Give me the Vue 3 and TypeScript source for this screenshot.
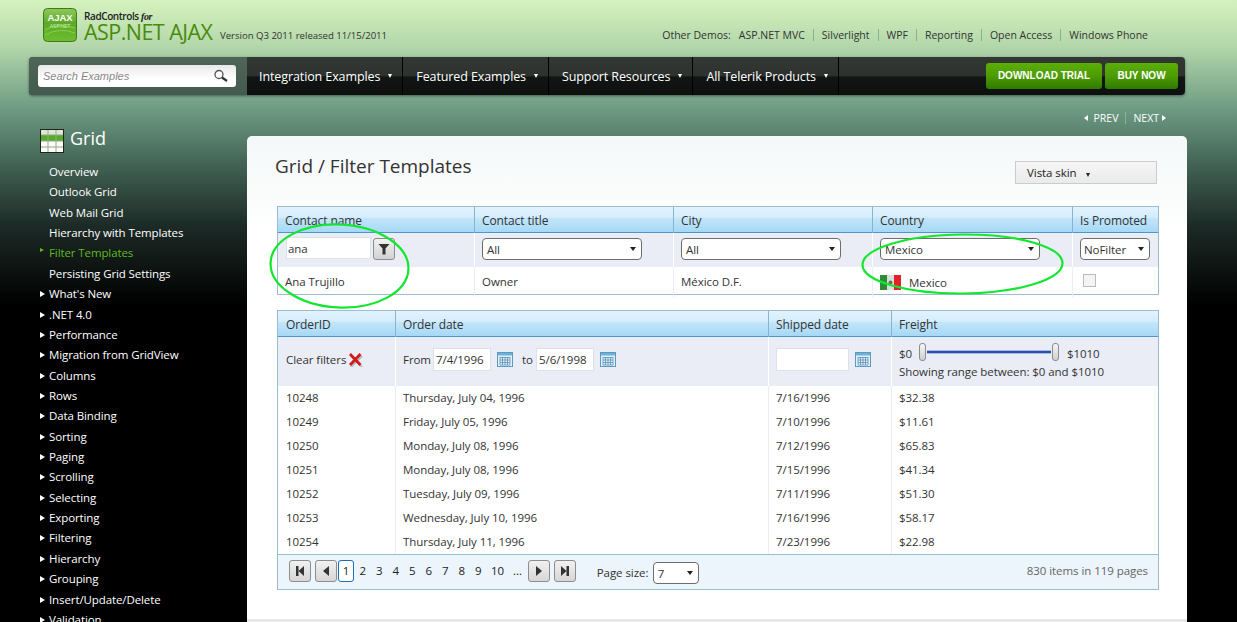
<script setup lang="ts">
const demos = ['ASP.NET MVC', 'Silverlight', 'WPF', 'Reporting', 'Open Access', 'Windows Phone']
const navs = ['Integration Examples', 'Featured Examples', 'Support Resources', 'All Telerik Products']
const plain = ['Overview', 'Outlook Grid', 'Web Mail Grid', 'Hierarchy with Templates']
const arrowed = ["What's New", '.NET 4.0', 'Performance', 'Migration from GridView', 'Columns', 'Rows', 'Data Binding', 'Sorting', 'Paging', 'Scrolling', 'Selecting', 'Exporting', 'Filtering', 'Hierarchy', 'Grouping', 'Insert/Update/Delete', 'Validation']
const orders = [
  ['10248', 'Thursday, July 04, 1996', '7/16/1996', '$32.38'],
  ['10249', 'Friday, July 05, 1996', '7/10/1996', '$11.61'],
  ['10250', 'Monday, July 08, 1996', '7/12/1996', '$65.83'],
  ['10251', 'Monday, July 08, 1996', '7/15/1996', '$41.34'],
  ['10252', 'Tuesday, July 09, 1996', '7/11/1996', '$51.30'],
  ['10253', 'Wednesday, July 10, 1996', '7/16/1996', '$58.17'],
  ['10254', 'Thursday, July 11, 1996', '7/23/1996', '$22.98']
]
const pages = ['2', '3', '4', '5', '6', '7', '8', '9', '10', '...']
</script>

<template>
  <div class="page">
    <header class="top">
      <div class="brand">
        <svg class="logo" width="35" height="35" viewBox="0 0 35 35">
          <defs>
            <linearGradient id="lg" x1="0" y1="0" x2="0" y2="1">
              <stop offset="0" stop-color="#8fc95a" />
              <stop offset="0.45" stop-color="#5da92a" />
              <stop offset="1" stop-color="#6ebd2e" />
            </linearGradient>
          </defs>
          <rect x="0.5" y="0.5" width="33" height="33" rx="4" fill="url(#lg)" stroke="#3f7a1c" />
          <path d="M2 22 Q14 14 32 20 M2 27 Q16 19 32 25" stroke="#86cf4c" fill="none" />
          <text x="17" y="13" text-anchor="middle" class="logo-a">AJAX</text>
          <text x="17" y="20" text-anchor="middle" class="logo-b">ASP.NET</text>
        </svg>
        <div class="brand-text">
          <div class="rad">RadControls <i>for</i></div>
          <div class="asp">ASP.NET AJAX</div>
        </div>
        <div class="version">Version Q3 2011 released 11/15/2011</div>
      </div>
      <div class="demos">
        <span class="demos-label">Other Demos:</span>
        <span v-for="d in demos" :key="d" class="demo">{{ d }}</span>
      </div>
    </header>

    <nav class="bar">
      <div class="search-wrap">
        <div class="search">
          <span>Search Examples</span>
          <svg width="16" height="14" viewBox="0 0 16 14">
            <circle cx="6" cy="5.5" r="4" fill="#fff" stroke="#555" stroke-width="1.3" />
            <path d="M9 8.5 L14 12" stroke="#333" stroke-width="2.2" />
          </svg>
        </div>
      </div>
      <div class="menu">
        <div v-for="n in navs" :key="n" class="menu-item">{{ n }}<i class="down white"></i></div>
      </div>
      <div class="cta">
        <span class="btn trial">DOWNLOAD TRIAL</span>
        <span class="btn buy">BUY NOW</span>
      </div>
    </nav>

    <div class="prevnext">
      <i class="tri-l"></i><span class="pn">PREV</span><span class="pn-sep"></span><span class="pn">NEXT</span><i class="tri-r"></i>
    </div>

    <div class="columns">
      <aside class="side">
        <div class="side-head">
          <svg width="24" height="24" viewBox="0 0 24 24">
            <rect x="0.5" y="0.5" width="23" height="23" fill="#fafcf5" stroke="#222" />
            <rect x="1" y="1" width="22" height="5" fill="#dfe8d2" />
            <rect x="1" y="6" width="22" height="6" fill="#4fae24" />
            <path d="M8 1V23M16 1V23M1 6H23M1 12H23M1 18H23" stroke="#97a690" stroke-width="1" fill="none" />
          </svg>
          <span>Grid</span>
        </div>
        <ul class="side-list">
          <li v-for="p in plain" :key="p">{{ p }}</li>
          <li class="active"><i class="tri-s green"></i>Filter Templates</li>
          <li>Persisting Grid Settings</li>
          <li v-for="a in arrowed" :key="a"><i class="tri-s"></i>{{ a }}</li>
        </ul>
      </aside>

      <main class="panel">
        <div class="panel-head">
          <h1>Grid / Filter Templates</h1>
          <div class="skin">Vista skin<i class="down dark"></i></div>
        </div>

        <section class="grid g1">
          <div class="row head">
            <div>Contact name</div><div>Contact title</div><div>City</div><div>Country</div><div>Is Promoted</div>
          </div>
          <div class="row filter f1">
            <div class="fc">
              <span class="txt w86">ana</span>
              <span class="fbtn">
                <svg width="12" height="12" viewBox="0 0 12 12"><path d="M0.5 1H11.5L7.5 5.5V11.5H4.5V5.5Z" fill="#333" /></svg>
              </span>
            </div>
            <div class="fc"><span class="sel">All<i class="down dark big"></i></span></div>
            <div class="fc"><span class="sel">All<i class="down dark big"></i></span></div>
            <div class="fc"><span class="sel">Mexico<i class="down dark big"></i></span></div>
            <div class="fc"><span class="sel small">NoFilter<i class="down dark big"></i></span></div>
          </div>
          <div class="row data tall">
            <div>Ana Trujillo</div><div>Owner</div><div>México D.F.</div>
            <div class="country">
              <svg width="21" height="15" viewBox="0 0 21 15">
                <rect width="7" height="15" fill="#2e8b3a" /><rect x="7" width="7" height="15" fill="#dcdcdc" /><rect x="14" width="7" height="15" fill="#e0222a" />
                <circle cx="10.5" cy="7.5" r="2" fill="#6b6b5a" />
              </svg>
              <span>Mexico</span>
            </div>
            <div><span class="check"></span></div>
          </div>
        </section>

        <section class="grid g2">
          <div class="row head">
            <div>OrderID</div><div>Order date</div><div>Shipped date</div><div>Freight</div>
          </div>
          <div class="row filter f2">
            <div class="clear">Clear filters
              <svg width="15" height="15" viewBox="0 0 15 15"><path d="M3 4L14 15M14 4L3 15" stroke="#999" stroke-width="2" opacity="0.6" /><path d="M2 2L12.5 13M12.5 2L2 13" stroke="#d11a1a" stroke-width="2.8" /></svg>
            </div>
            <div class="dates">
              <span class="from">From</span><span class="txt dt">7/4/1996</span>
              <svg class="cal" width="16" height="15" viewBox="0 0 16 15"><use href="#cal-icon" /></svg>
              <span class="to">to</span><span class="txt dt">5/6/1998</span>
              <svg class="cal" width="16" height="15" viewBox="0 0 16 15"><use href="#cal-icon" /></svg>
            </div>
            <div class="dates">
              <span class="txt ship"></span>
              <svg class="cal" width="16" height="15" viewBox="0 0 16 15">
                <defs>
                  <g id="cal-icon">
                    <rect x="0.5" y="0.5" width="15" height="14" fill="#e4f0f8" stroke="#5b9ac0" />
                    <rect x="1" y="1" width="14" height="2.5" fill="#6fb0d6" />
                    <path d="M3 5.5H13M3 8H13M3 10.5H13M3 13H13M3 5V13M5.5 5V13M8 5V13M10.5 5V13M13 5V13" stroke="#5b8fb5" stroke-width="0.8" fill="none" />
                  </g>
                </defs>
                <use href="#cal-icon" />
              </svg>
            </div>
            <div class="freight">
              <div class="slide-row">
                <span class="lo">$0</span>
                <div class="slider">
                  <span class="thumb"></span>
                  <span class="track"></span>
                  <span class="thumb"></span>
                </div>
                <span class="hi">$1010</span>
              </div>
              <div class="range">Showing range between: $0 and $1010</div>
            </div>
          </div>
          <div v-for="o in orders" :key="o[0]" class="row data">
            <div v-for="(c, i) in o" :key="i">{{ c }}</div>
          </div>
          <div class="pager">
            <span class="pbtn"><svg width="10" height="10" viewBox="0 0 10 10"><path d="M1 0H3.5V10H1ZM9 0V10L3.5 5Z" fill="#333" /></svg></span>
            <span class="pbtn gap"><svg width="10" height="10" viewBox="0 0 10 10"><path d="M8 0V10L2 5Z" fill="#333" /></svg></span>
            <span class="num cur">1</span>
            <span v-for="p in pages" :key="p" class="num" :class="{ ten: p === '10', dots: p === '...' }">{{ p }}</span>
            <span class="pbtn after"><svg width="10" height="10" viewBox="0 0 10 10"><path d="M2 0V10L8 5Z" fill="#333" /></svg></span>
            <span class="pbtn gap"><svg width="10" height="10" viewBox="0 0 10 10"><path d="M1 0V10L6.5 5ZM6.5 0H9V10H6.5Z" fill="#333" /></svg></span>
            <span class="psize">Page size:</span>
            <span class="sel tiny">7<i class="down dark big"></i></span>
            <span class="pinfo"><b>830</b> items in <b>119</b> pages</span>
          </div>
        </section>
      </main>
    </div>

    <svg class="notes" width="1237" height="622" viewBox="0 0 1237 622">
      <ellipse cx="339.5" cy="266" rx="69" ry="41.5" transform="rotate(3 339.5 266)" />
      <ellipse cx="962.5" cy="264" rx="100" ry="29.5" transform="rotate(-0.5 962.5 264)" />
    </svg>
  </div>
</template>

<style>
html, body { margin: 0; background: #000; overflow: hidden; }
</style>

<style scoped>
.page {
  position: relative;
  width: 1237px;
  height: 622px;
  overflow: hidden;
  font-family: "Open Sans", "Noto Sans", sans-serif;
  font-size: 11.5px;
  letter-spacing: -0.06px;
  color: #333;
  background: linear-gradient(#d5f2bd 0, #b4d8ab 45px, #6c9a82 110px, #3f5d50 170px, #1d2b27 225px, #000 305px);
}
.top { height: 57px; display: flex; justify-content: space-between; padding: 0 89px 0 43px; box-sizing: border-box; }
.brand { display: flex; align-items: flex-start; padding-top: 8px; }
.logo { margin-right: 6px; }
.logo-a { font: bold 9.5px "Liberation Sans", sans-serif; fill: #fff; }
.logo-b { font: 5px "Liberation Sans", sans-serif; fill: #cdeeb0; }
.brand-text { width: 136px; }
.rad { font-size: 10px; line-height: 11px; color: #222; font-weight: 600; margin-top: 3px; letter-spacing: -0.4px; }
.rad i { font-family: "Liberation Serif", serif; }
.asp { font-size: 21.5px; line-height: 19px; color: #4a8a0c; letter-spacing: -0.55px; white-space: nowrap; }
.version { font-size: 9.6px; letter-spacing: -0.02px; color: #333; margin-top: 21px; white-space: nowrap; }
.demos { display: flex; align-items: center; height: 70px; font-size: 10.5px; letter-spacing: 0; color: #333; white-space: nowrap; }
.demo { padding: 0 8px; border-left: 1px solid #8fae8b; line-height: 12px; }
.demos-label + .demo { border-left: 0; }
.demo:last-child { padding-right: 0; }

.bar {
  margin: 0 52px 0 29px; height: 38px; display: flex; border-radius: 4px;
  background: linear-gradient(#333835 0, #2d322f 50%, #111513 52%, #0e100f 100%);
  box-shadow: 0 1px 3px rgba(0, 0, 0, 0.45);
}
.search-wrap {
  width: 218px; flex: none; box-sizing: border-box; padding: 8px 11px 8px 9px;
  background: linear-gradient(#4f6558, #445a4e); border-radius: 4px 0 0 4px;
}
.search {
  height: 22px; border-radius: 3px; background: linear-gradient(#e8e8e8, #fff 60%); display: flex; align-items: center;
  justify-content: space-between; padding: 0 7px 0 5px; font: italic 11px "Liberation Sans", sans-serif; letter-spacing: 0; color: #888;
}
.menu { display: flex; }
.menu-item {
  display: flex; align-items: center; padding: 0 10px 0 13px; color: #fff; font-size: 12.5px; letter-spacing: -0.1px; white-space: nowrap;
  border-right: 1px solid #000;
}
.menu-item:first-child { padding-left: 12px; }
.down { display: inline-block; width: 0; height: 0; border-left: 2.5px solid transparent; border-right: 2.5px solid transparent; border-top: 4px solid; }
.white { color: #fff; margin-left: 8px; }
.dark { color: #222; margin-left: 9px; }
.down.big { border-left-width: 3.5px; border-right-width: 3.5px; border-top-width: 4px; margin-left: auto; }
.cta { margin-left: auto; display: flex; gap: 3px; padding: 6px 7px 0 0; }
.btn {
  height: 26px; padding-bottom: 1px; box-sizing: border-box; display: flex; align-items: center; justify-content: center; border-radius: 3px; color: #fff;
  font: bold 10px "Liberation Sans", sans-serif; letter-spacing: 0; background: linear-gradient(#5bae07, #4d9c03 50%, #2f7a00);
}
.trial { width: 116px; }
.buy { width: 73px; }

.prevnext { height: 41px; display: flex; align-items: center; justify-content: flex-end; padding-right: 71px; color: #fff; font-size: 10.5px; letter-spacing: 0; box-sizing: border-box; padding-top: 5px; }
.pn-sep { width: 1px; height: 12px; background: #8fae9c; margin: 0 7px; }
.tri-l, .tri-r { width: 0; height: 0; border-top: 3px solid transparent; border-bottom: 3px solid transparent; }
.tri-l { border-right: 4px solid #fff; margin-right: 6px; }
.tri-r { border-left: 4px solid #fff; margin-left: 3px; }

.columns { display: flex; }
.side { width: 218px; margin-left: 29px; flex: none; color: #fff; }
.side-head { display: flex; align-items: center; gap: 6px; padding-left: 11px; font-size: 18px; letter-spacing: 0; height: 24px; margin-top: -7px; }
.side-head span { margin-bottom: 6px; }
.side-list { list-style: none; margin: 9px 0 0; padding: 0; letter-spacing: -0.1px; }
.side-list li { position: relative; height: 20.36px; line-height: 20px; padding-left: 20px; white-space: nowrap; }
.tri-s { position: absolute; left: 11px; top: 7px; width: 0; height: 0; border-top: 3px solid transparent; border-bottom: 3px solid transparent; border-left: 5px solid #fff; }
.tri-s.green { border-left-color: #5fba1d; border-top-width: 2.5px; border-bottom-width: 2.5px; border-left-width: 4px; top: 5px; }
.active { color: #5fba1d; }

.panel {
  width: 940px; height: 486px; flex: none; box-sizing: border-box; padding: 0 28px 0 30px; border-radius: 5px 5px 0 0;
  background: linear-gradient(#f4f8f8, #fff 100px); border-bottom: 3px solid #e8e8e8;
  color: #333;
}
.panel-head { height: 70px; display: flex; justify-content: space-between; align-items: flex-start; padding-right: 2px; }
h1 { font-size: 19px; font-weight: 400; letter-spacing: 0; margin: 17px 0 0 -2px; color: #333; line-height: 26px; }
.skin {
  width: 142px; height: 23px; box-sizing: border-box; margin-top: 25px; padding-left: 11px; line-height: 21px;
  border: 1px solid #ccc; background: linear-gradient(#f6f6f6, #eaeaea); color: #222;
}
.grid { width: 882px; border: 1px solid #9bbdd4; box-sizing: border-box; background: #fff; }
.g1 { height: 89px; margin-bottom: 15px; }
.g2 { height: 280px; }
.row { display: grid; }
.g1 .row { grid-template-columns: 197px 199px 199px 200px 1fr; }
.g2 .row { grid-template-columns: 118px 373px 123px 1fr; }
.row > div { box-sizing: border-box; padding-left: 7px; white-space: nowrap; border-right: 1px solid #eaedf4; }
.row > div:last-child { border-right: 0; }
.g2 .row > div:first-child { padding-left: 8px; }
.head { height: 26px; box-sizing: border-box; background: linear-gradient(#e3f3fe 0, #d2ecfc 45%, #c3e5fa 46%, #a5d8f5 100%); border-bottom: 1px solid #4a97cc; font-size: 12px; letter-spacing: -0.1px; }
.head > div { line-height: 27px; border-right: 1px solid #85b4d4 !important; }
.head > div:last-child { border-right: 0 !important; }
.filter { background: #eaedf6; }
.filter > div { border-right: 1px solid #fff; }
.f1 { height: 34px; }
.f2 { height: 49px; }
.fc { display: flex; align-items: flex-start; padding-top: 5px; }
.g1 .fc { padding-right: 8px; padding-left: 7px; }
.g1 .fc:first-child { padding-left: 8px; }
.txt { height: 22px; line-height: 21px; background: #fff; border: 1px solid #dde1ea; box-sizing: border-box; display: inline-block; padding-left: 1px; }
.w86 { width: 85px; margin-top: -1px; }
.fbtn {
  width: 22px; height: 22px; margin-left: 2px; border: 1px solid #8d8d8d; border-radius: 3px; box-sizing: border-box; display: flex; align-items: center; justify-content: center;
  background: linear-gradient(#f1f1f1, #d2d2d2);
}
.sel {
  width: 160px; height: 22px; box-sizing: border-box; background: #fff; border: 1px solid #6d6d6d; border-radius: 4px; display: flex; align-items: center;
  padding: 0 5px 0 4px;
}
.small { width: 70px; padding-left: 3px; }
.data { height: 24px; }
.data > div { line-height: 24px; }
.tall { height: 27px; }
.tall > div { line-height: 29px; }
.country { display: flex; align-items: center; gap: 8px; padding-top: 1px; }
.check { display: inline-block; width: 11px; height: 11px; border: 1px solid #bbb; background: #f4f4f4; margin: 7px 0 0 3px; vertical-align: top; }
.clear { display: flex; align-items: center; gap: 2px; padding-bottom: 5px; }
.dates { display: flex; align-items: center; padding-bottom: 5px; }
.from { width: 30px; flex: none; }
.dt { width: 58px; padding-left: 2px; height: 23px; line-height: 21px; }
.to { width: 14px; margin-left: 9px; flex: none; }
.cal { margin-left: 6px; }
.ship { width: 73px; height: 23px; }
.freight { display: flex; flex-direction: column; padding-top: 6px; }
.slide-row { display: flex; align-items: center; height: 18px; margin-bottom: 3px; }
.lo { width: 13px; padding-top: 3px; }
.hi { padding-top: 3px; }
.slider { display: flex; align-items: center; width: 140px; margin: 0 8px 0 7px; }
.thumb { width: 7px; height: 18px; box-sizing: border-box; border: 1px solid #8d8d8d; border-radius: 3px; background: linear-gradient(#f6f6f6, #cfcfcf); flex: none; }
.track { flex: 1; height: 4px; box-sizing: border-box; background: #1a50d0; border: solid #b8b8b8; border-width: 1px 0; margin: 0 1px; }
.range { line-height: 16px; }
.pager { height: 35px; box-sizing: border-box; display: flex; align-items: flex-start; padding: 5px 0 0 11px; background: #ecf4fc; border-top: 1px solid #9bbdd4; }
.pbtn { width: 22px; height: 22px; box-sizing: border-box; border: 1px solid #8d8d8d; border-radius: 3px; background: linear-gradient(#f1f1f1, #d6d6d6); display: flex; align-items: center; justify-content: center; flex: none; }
.gap { margin-left: 4px; }
.num { width: 16.5px; flex: none; text-align: center; color: #222; line-height: 22px; }
.ten { width: 22px; }
.dots { width: 18px; }
.cur { width: 16px; height: 22px; border: 1px solid #1a6ec0; border-radius: 3px; box-sizing: border-box; background: #fff; line-height: 20px; margin: 0 0.5px 0 1px; }
.after { margin-left: 1.5px; }
.psize { width: 52px; margin: 2px 4px 0 20.7px; line-height: 22px; flex: none; white-space: nowrap; }
.tiny { width: 46px; margin-top: 2px; flex: none; }
.pinfo { margin-left: auto; padding-right: 10px; color: #666; line-height: 22px; }
.pinfo b { font-weight: 400; }
.notes { position: absolute; left: 0; top: 0; pointer-events: none; }
.notes ellipse { fill: none; stroke: #14e630; stroke-width: 2.2; }
</style>
